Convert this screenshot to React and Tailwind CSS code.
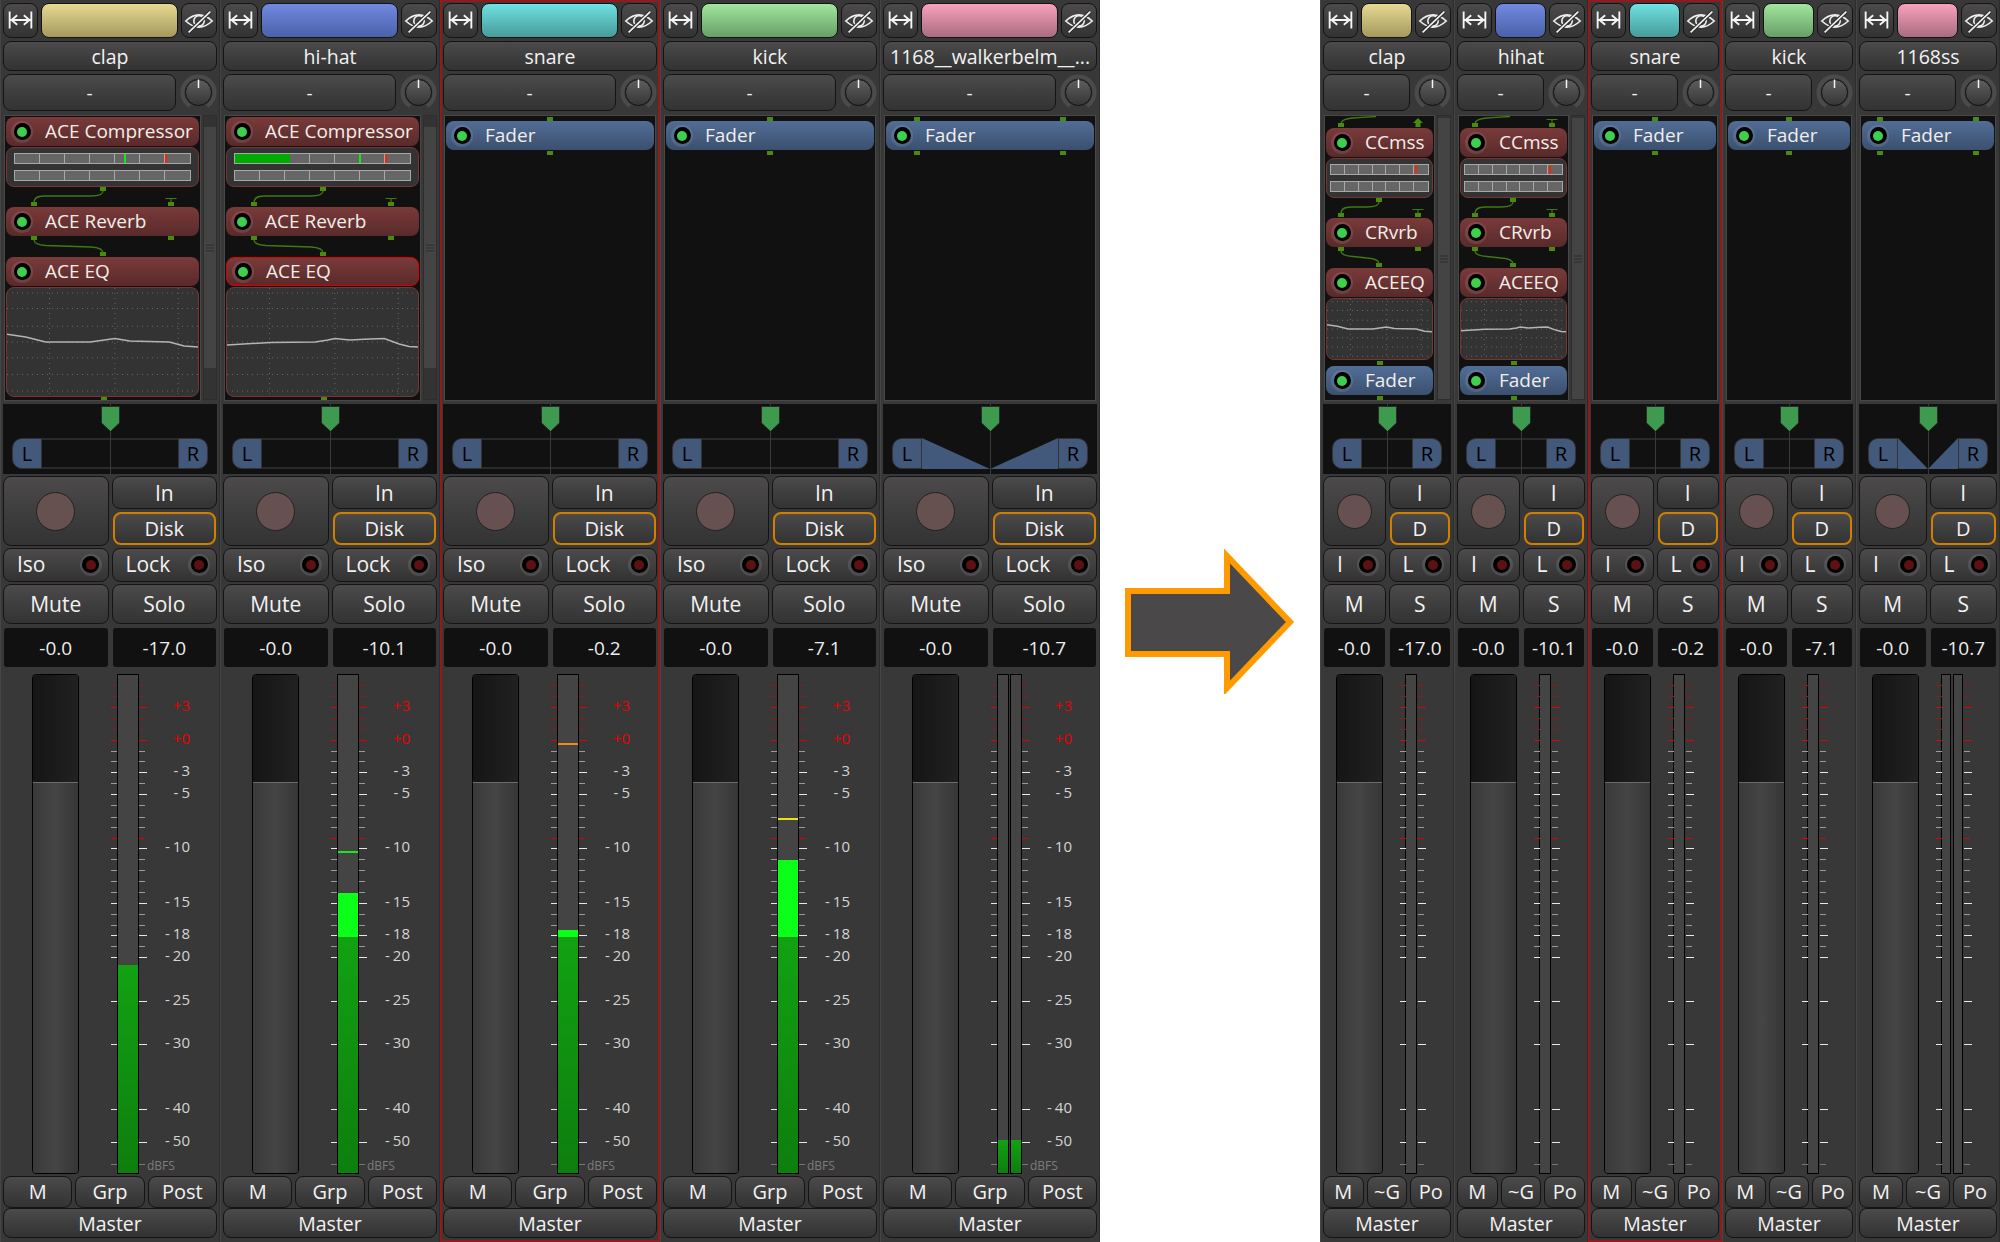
const BASE = 'flex items-center rounded-[8px] border border-[#141414] bg-linear-to-b from-[#4c4a4a] to-[#333333] text-[#f2f2f2]';
const BTN = `${BASE} justify-center`;
const TXT = `${BASE} justify-center pt-[2px]`;
const PIN = '#4a8a0c';
const WIRE = '#3f7a10';

const MAJOR = [
  [707, '+3', true], [740, '+0', true], [772, '-3'], [794, '-5'], [848, '-10'], [903, '-15'], [935, '-18'],
  [957, '-20'], [1001, '-25'], [1044, '-30'], [1109, '-40'], [1142, '-50'],
];
const MINOR = [751, 761, 783, 805, 817, 827, 859, 870, 881, 892, 914, 925, 946, 1164];
const MINOR_RED = [685, 696, 718, 729];

const CLAP_CURVE = '0,47 19,50 39,55 54,55 84,55 109,51.5 124,54 164,55 179,59 193,60';
const HAT_CURVE = '0,58 44,55.5 89,55 102,53 109,51.5 124,53 144,52 159,51.5 174,57 184,59.5 193,60';

const SIZES = {
  full: { width: 'w-[220px]', faderGap: 'ml-[29px]', meterGap: 'ml-[38px]', bar: 'w-[22px]', twin: 'w-[12px]', twinGap: 'gap-[1px]', procBox: 'w-[197px]', right: 136, meterLeft: 114, labels: true, cx: 98, lx: 29, rx: 166, barPad: 'px-[7px]', display: 'h-[110px]' },
  small: { width: 'w-[134px]', faderGap: 'ml-[13px]', meterGap: 'ml-[22px]', bar: 'w-[12px]', twin: 'w-[10px]', twinGap: 'gap-[2px]', procBox: 'w-[111px]', right: 95, meterLeft: 83, labels: false, cx: 54, lx: 16, rx: 93, barPad: 'px-[3px]', display: 'h-[62px]' },
  wide: { width: 'w-[144px]', faderGap: 'ml-[13px]', meterGap: 'ml-[22px]', bar: 'w-[12px]', twin: 'w-[10px]', twinGap: 'gap-[2px]', procBox: 'w-[111px]', right: 95, meterLeft: 83, labels: false, cx: 54, lx: 16, rx: 93, barPad: 'px-[3px]', display: 'h-[62px]' },
};

function WidthIcon() {
  return (
    <svg width="35" height="35" viewBox="0 0 35 35" fill="none" stroke="#f4f4f4" strokeWidth="2">
      <path d="M6 8V26M29 8V26M7 17H28" />
      <path d="M14 12L8 17L14 22M21 12L27 17L21 22" />
    </svg>
  );
}

function EyeIcon() {
  return (
    <svg width="36" height="35" viewBox="0 0 36 35" fill="none" stroke="#f0f0f0">
      <path d="M4 18Q18 5 32 18Q18 31 4 18Z" strokeWidth="1.7" />
      <circle cx="18" cy="18" r="5.5" strokeWidth="1.7" />
      <path d="M7 30L30 8" stroke="#2a2a2a" strokeWidth="4" />
      <path d="M7 30L30 8" strokeWidth="1.8" />
    </svg>
  );
}

function Knob() {
  return (
    <svg width="37" height="37" viewBox="0 0 37 37" fill="none">
      <defs>
        <linearGradient id="knob-face" x1="0" y1="0" x2="0" y2="1">
          <stop offset="0" stopColor="#5e5e5e" />
          <stop offset="1" stopColor="#363636" />
        </linearGradient>
      </defs>
      <path d="M10 32.1A16 16 0 1 1 27 32.1" stroke="#4b4b4b" strokeWidth="4" />
      <circle cx="18.5" cy="18.5" r="13" fill="url(#knob-face)" stroke="#111" />
      <path d="M18.5 5.5V14" stroke="#f4f4f4" strokeWidth="1.5" />
    </svg>
  );
}

function Led({ on }) {
  return (
    <div className="flex h-[22px] w-[22px] shrink-0 items-center justify-center rounded-full bg-white/10">
      <div className="flex h-[17px] w-[17px] items-center justify-center rounded-full bg-black">
        <div className={on ? 'h-[10px] w-[10px] rounded-full bg-[#3ecf4c]' : 'h-[10px] w-[10px] rounded-full bg-[#5c1212]'} />
      </div>
    </div>
  );
}

function Processor({ name, blue, selected }) {
  return (
    <div
      className={`flex h-[29px] shrink-0 items-center gap-[12px] rounded-[8px] pl-[5px] text-[19px] text-[#f2eeea] ${
        blue ? 'bg-linear-to-b from-[#526d96] to-[#3b506f]' : 'bg-linear-to-b from-[#7a3a3a] to-[#592a2a]'
      } ${selected ? 'border border-[#e00000]' : ''}`}
    >
      <Led on />
      <span className="whitespace-nowrap">{name}</span>
    </div>
  );
}

function Pin({ x, y }) {
  return <rect x={x - 3} y={y} width="6" height="4" fill={PIN} />;
}

function OutToIn({ s }) {
  return (
    <svg width="100%" height="20" className="block shrink-0" fill="none">
      <Pin x={s.cx} y={0} />
      <Pin x={s.lx} y={15} />
      <path
        d={`M${s.cx} 4C${s.cx} 8 ${s.cx - 5} 9 ${s.cx - 12} 9L${s.lx + 10} 9C${s.lx + 3} 9 ${s.lx} 11 ${s.lx} 16`}
        stroke={WIRE}
        strokeWidth="1.3"
      />
      <Pin x={s.rx} y={15} />
      <path d={`M${s.rx - 5.5} 11.5H${s.rx + 5.5}M${s.rx} 11.5V15`} stroke={WIRE} strokeWidth="1.2" />
    </svg>
  );
}

function InToOut({ s }) {
  return (
    <svg width="100%" height="21" className="block shrink-0" fill="none">
      <Pin x={s.lx} y={0} />
      <Pin x={s.rx} y={0} />
      <Pin x={s.cx} y={16} />
      <path
        d={`M${s.lx} 4C${s.lx} 8 ${s.lx + 5} 9 ${s.lx + 12} 9.5L${s.cx - 12} 11C${s.cx - 4} 11.5 ${s.cx} 13 ${s.cx} 17`}
        stroke={WIRE}
        strokeWidth="1.3"
      />
    </svg>
  );
}

function TopWire({ s, arrow }) {
  return (
    <svg width="100%" height="12" className="block shrink-0" fill="none">
      <path d={`M${s.lx + 35} 0.5C${s.lx + 24} 1 ${s.lx + 14} 1.5 ${s.lx + 8} 2.5C${s.lx + 2} 3.5 ${s.lx} 5 ${s.lx} 8`} stroke={WIRE} strokeWidth="1.3" />
      <Pin x={s.lx} y={7} />
      {arrow ? (
        <path d={`M${s.rx} 2L${s.rx + 5} 7H${s.rx + 2.5}V11H${s.rx - 2.5}V7H${s.rx - 5}Z`} fill={PIN} />
      ) : (
        <g>
          <Pin x={s.rx} y={7} />
          <path d={`M${s.rx - 5.5} 3.5H${s.rx + 5.5}M${s.rx} 3.5V7`} stroke={WIRE} strokeWidth="1.2" />
        </g>
      )}
    </svg>
  );
}

function Pins({ height, xs, y }) {
  return (
    <svg width="100%" height={height} className="block shrink-0">
      {xs.map((x) => (
        <Pin key={x} x={x} y={y} />
      ))}
    </svg>
  );
}

function GainBar({ fill, green, red }) {
  return (
    <div className="relative grid h-[11px] grid-cols-7 border border-[#a8a8a8] bg-[#666666]">
      {[0, 1, 2, 3, 4, 5, 6].map((i) => (
        <div key={i} className={i < 6 ? 'border-r border-[#a8a8a8]' : ''} />
      ))}
      {fill && <div className="absolute inset-y-0 left-0 bg-[#00aa00]" style={{ width: fill }} />}
      {green && <div className="absolute inset-y-0 w-[2px] bg-[#12e812]" style={{ left: green }} />}
      {red && <div className="absolute inset-y-0 w-[2px] bg-[#f02808]" style={{ left: red }} />}
    </div>
  );
}

function CompDisplay({ s, fill, green, red }) {
  return (
    <div className={`mt-[1px] flex h-[40px] shrink-0 flex-col justify-center gap-[6px] rounded-[8px] border border-[#7a3434] bg-[#333333] ${s.barPad}`}>
      <GainBar fill={fill} green={green} red={red} />
      <GainBar />
    </div>
  );
}

function EqDisplay({ s, curve }) {
  return (
    <div className={`mt-[1px] shrink-0 overflow-hidden rounded-[8px] border border-[#7a3434] bg-[#333333] ${s.display}`}>
      <svg width="100%" height="100%" viewBox="0 0 193 110" preserveAspectRatio="none" fill="none" className="block">
        {[5, 21, 39, 55, 71, 88, 105].map((y) => (
          <path key={y} d={`M0 ${y}H193`} stroke="#666" strokeDasharray="1 4" vectorEffect="non-scaling-stroke" />
        ))}
        {[43, 109, 173].map((x) => (
          <path key={x} d={`M${x} 0V110`} stroke="#666" strokeDasharray="1 4" vectorEffect="non-scaling-stroke" />
        ))}
        <polyline points={curve} stroke="#b4b4b4" strokeWidth="1.5" vectorEffect="non-scaling-stroke" />
      </svg>
    </div>
  );
}

function ScrollBar({ small }) {
  return (
    <div className="ml-[2px] flex h-[285px] w-[14px] flex-col border border-[#2e2e2e] bg-[#333333]">
      <div className={small ? 'mt-[2px] flex h-[282px] items-center justify-center bg-[#444444]' : 'mt-[11px] flex h-[241px] items-center justify-center bg-[#444444]'}>
        <svg width="8" height="8" stroke="#2c2c2c">
          <path d="M0 1H8M0 4H8M0 7H8" />
        </svg>
      </div>
    </div>
  );
}

function FullChain({ s, eqSelected, fill, green, red, curve }) {
  return (
    <div className="flex flex-col px-[1px] pt-[1px]">
      <Processor name="ACE Compressor" />
      <CompDisplay s={s} fill={fill} green={green} red={red} />
      <div className="-mx-[1px]">
        <OutToIn s={s} />
      </div>
      <Processor name="ACE Reverb" />
      <div className="-mx-[1px]">
        <InToOut s={s} />
      </div>
      <Processor name="ACE EQ" selected={eqSelected} />
      <EqDisplay s={s} curve={curve} />
      <Pins height={4} xs={[s.cx]} y={0} />
    </div>
  );
}

function SmallChain({ s, arrow, red, curve }) {
  return (
    <div className="flex flex-col px-[1px]">
      <div className="-mx-[1px]">
        <TopWire s={s} arrow={arrow} />
      </div>
      <Processor name="CCmss" />
      <CompDisplay s={s} red={red} />
      <div className="-mx-[1px]">
        <OutToIn s={s} />
      </div>
      <Processor name="CRvrb" />
      <div className="-mx-[1px]">
        <InToOut s={s} />
      </div>
      <Processor name="ACEEQ" />
      <EqDisplay s={s} curve={curve} />
      <Pins height={6} xs={[s.cx]} y={1} />
      <Processor name="Fader" blue />
      <Pins height={5} xs={[s.cx]} y={1} />
    </div>
  );
}

function Meter({ widthClass, bright, dark, peak, peakColor }) {
  return (
    <div className={`relative flex h-[500px] flex-col justify-end overflow-hidden border border-black bg-[#444444] ${widthClass}`}>
      {bright && <div className="bg-[#0bff18]" style={{ height: dark - bright }} />}
      {dark && <div className="bg-linear-to-b from-[#12a212] to-[#0e7e0e]" style={{ height: 1173 - dark }} />}
      {peak && <div className="absolute inset-x-0 h-[2px]" style={{ top: peak - 675, backgroundColor: peakColor }} />}
    </div>
  );
}

function MeterScale({ s, twin }) {
  const left = s.meterLeft;
  const right = twin ? (s.labels ? 139 : 105) : s.right;
  const labelEnd = twin ? 189 : 187;
  return (
    <svg className="absolute left-0 top-0 h-[500px] w-full font-['Open_Sans',sans-serif]" fill="none">
      {MINOR.map((y) => (
        <path key={y} d={`M${left - 6} ${y - 673.5}h6M${right} ${y - 673.5}h6`} stroke={y === 1164 ? '#777' : '#9a9a9a'} />
      ))}
      {MINOR_RED.map((y) => (
        <path key={y} d={`M${left - 6} ${y - 673.5}h6M${right} ${y - 673.5}h6`} stroke="#8c1a1a" />
      ))}
      <path d={`M${left - 6} ${838 - 673.5}h6M${right} ${838 - 673.5}h6`} stroke="#e00000" />
      {MAJOR.map(([y, label, hot]) => (
        <g key={label}>
          <path d={`M${left - 6} ${y - 673.5}h6M${right} ${y - 673.5}h8`} stroke={hot ? '#e80000' : '#e8e8e8'} />
          {s.labels && (
            <text x={labelEnd} y={y - 676} textAnchor="end" dominantBaseline="central" fontSize="15" fill={hot ? '#e80000' : '#d4d4d4'}>
              {label[0]}
              <tspan dx={hot ? 0 : 3}>{label.slice(1)}</tspan>
            </text>
          )}
        </g>
      ))}
      {s.labels && (
        <text x={twin ? 147 : 144} y={496} fontSize="12" fill="#7c7c7c">
          dBFS
        </text>
      )}
    </svg>
  );
}

function Strip({ size, name, color, selected, chain, wedge, twin, pinXs, gain, peakText, meter, iso, lock, mute, solo, input, disk, bus }) {
  const s = SIZES[size];
  return (
    <div
      className={`flex h-[1242px] shrink-0 flex-col bg-[#383838] px-[3px] pt-[3px] ${s.width} ${
        selected ? 'shadow-[inset_0_0_0_2px_#921a1a]' : 'shadow-[inset_-1px_0_0_#2d2d2d,inset_1px_0_0_#454545]'
      }`}
    >
      <div className="flex h-[35px] gap-[3px]">
        <div className={`${BTN} w-[35px] shrink-0`}>
          <WidthIcon />
        </div>
        <div className={`flex-1 rounded-[8px] border border-[#141414] bg-linear-to-b ${color}`} />
        <div className={`${BTN} w-[36px] shrink-0`}>
          <EyeIcon />
        </div>
      </div>

      <div className={`${TXT} mt-[3px] h-[30px] overflow-hidden whitespace-nowrap text-[19.5px]`}>{name}</div>

      <div className="mt-[3px] flex h-[37px] gap-[4px]">
        <div className={`${TXT} flex-1 text-[19px]`}>-</div>
        <Knob />
      </div>

      {/* Processor box */}
      <div className="mt-[4px] flex h-[286px]">
        {chain ? (
          <>
            <div className={`ml-[1px] shrink-0 overflow-hidden border border-[#484848] bg-[#111111] ${s.procBox}`}>{chain}</div>
            <ScrollBar small={size !== 'full'} />
          </>
        ) : (
          <div className="mx-[1px] flex-1 border border-[#484848] bg-[#111111] px-[1px]">
            <Pins height={5} xs={pinXs} y={1} />
            <Processor name="Fader" blue />
            <Pins height={6} xs={pinXs} y={1} />
          </div>
        )}
      </div>

      {/* Panner */}
      <div className="relative mt-[3px] flex h-[70px] items-end bg-[#111111] px-[9px] pb-[5px]">
        <div className="absolute inset-y-0 left-1/2 w-[1px] bg-[#3a3a3a]" />
        <svg width="19" height="26" viewBox="0 0 19 26" className="absolute left-1/2 top-[2px] -ml-[9px]">
          <path d="M0.5 0.5H18.5V17L9.5 25.5L0.5 17Z" fill="#3e9a4e" stroke="#2a2a2a" />
        </svg>
        <div className="flex h-[31px] w-full">
          <div className="flex w-[30px] shrink-0 items-center justify-center rounded-l-[10px] border border-[#333] bg-[#43597c] pt-[1px] text-[20px] text-black">L</div>
          <div className={`flex-1 ${wedge ? '' : 'border-y-2 border-[#2a2a2a]'}`}>
            {wedge && (
              <svg width="100%" height="100%" viewBox="0 0 100 100" preserveAspectRatio="none" className="block">
                <polygon points="0,0 50,100 0,100" fill="#43597c" />
                <polygon points="100,0 50,100 100,100" fill="#43597c" />
              </svg>
            )}
          </div>
          <div className="flex w-[30px] shrink-0 items-center justify-center rounded-r-[10px] border border-[#333] bg-[#43597c] pt-[1px] text-[20px] text-black">R</div>
        </div>
      </div>

      {/* Record and monitor */}
      <div className="mt-[2px] grid h-[70px] grid-cols-2 gap-x-[3px]">
        <div className={BTN}>
          <div className={`rounded-full border border-[#222222] bg-[#675050] ${size === 'full' ? 'h-[39px] w-[39px]' : 'h-[35px] w-[35px]'}`} />
        </div>
        <div className="flex flex-col gap-[3px]">
          <div className={`${TXT} h-[33px] text-[21px]`}>{input}</div>
          <div className="mx-[1px] flex h-[33px] items-center justify-center rounded-[8px] border-2 border-[#d08000] bg-linear-to-b from-[#4c4a4a] to-[#333333] pt-[1px] text-[20px] text-[#f2f2f2]">{disk}</div>
        </div>
      </div>

      <div className="mt-[2px] grid h-[33px] grid-cols-2 gap-x-[3px]">
        <div className={`${BASE} justify-between pl-[13px] pr-[6px] text-[21px]`}>
          <span>{iso}</span>
          <Led />
        </div>
        <div className={`${BASE} justify-between pl-[13px] pr-[6px] text-[21px]`}>
          <span>{lock}</span>
          <Led />
        </div>
      </div>

      <div className="mt-[3px] grid h-[40px] grid-cols-2 gap-x-[3px] text-[21px]">
        <div className={TXT}>{mute}</div>
        <div className={TXT}>{solo}</div>
      </div>

      <div className="mt-[4px] grid h-[39px] grid-cols-2 gap-x-[5px] px-[1px] text-[19px] text-[#ececec]">
        <div className="flex items-center justify-center rounded-[3px] bg-[#111111] pt-[1px]">{gain}</div>
        <div className="flex items-center justify-center rounded-[3px] bg-[#111111] pt-[1px]">{peakText}</div>
      </div>

      {/* Fader and meter */}
      <div className="relative mt-[7px] flex h-[500px]">
        <div className={`flex h-[500px] w-[47px] flex-col overflow-hidden rounded-[4px] border border-black ${s.faderGap}`}>
          <div className="h-[107px] bg-linear-to-r from-[#151515] to-[#212121]" />
          <div className="flex-1 border-t border-[#6a6a6a] bg-linear-to-r from-[#3a3a3a] via-[#454545] to-[#363636]" />
        </div>
        {twin ? (
          <div className={`flex ${s.meterGap} ${s.twinGap}`}>
            <Meter widthClass={s.twin} {...meter} />
            <Meter widthClass={s.twin} {...meter} />
          </div>
        ) : (
          <div className={s.meterGap}>
            <Meter widthClass={s.bar} {...meter} />
          </div>
        )}
        <MeterScale s={s} twin={twin} />
      </div>

      <div className="mt-[2px] grid h-[29px] grid-cols-3 gap-x-[3px] text-[20px]">
        {bus.map((label) => (
          <div key={label} className={BTN}>
            {label}
          </div>
        ))}
      </div>
      <div className={`${TXT} mt-[3px] h-[30px] text-[19.5px]`}>Master</div>
    </div>
  );
}

const COLORS = {
  clap: 'from-[#e6da92] to-[#a59a5e]',
  hat: 'from-[#7289e2] to-[#4a62a8]',
  snare: 'from-[#70e2e2] to-[#479b9b]',
  kick: 'from-[#a2e69e] to-[#689f68]',
  pink: 'from-[#f9a2bd] to-[#a96c80]',
};

const BIG = { input: 'In', disk: 'Disk', iso: 'Iso', lock: 'Lock', mute: 'Mute', solo: 'Solo', bus: ['M', 'Grp', 'Post'] };
const LITTLE = { input: 'I', disk: 'D', iso: 'I', lock: 'L', mute: 'M', solo: 'S', bus: ['M', '~G', 'Po'] };

export default function App() {
  const full = SIZES.full;
  const small = SIZES.small;
  return (
    <div className="flex h-[1242px] w-[2000px] overflow-hidden bg-white font-['Open_Sans',sans-serif]">
      <Strip
        {...BIG}
        size="full"
        name="clap"
        color={COLORS.clap}
        gain="-0.0"
        peakText="-17.0"
        meter={{ dark: 965 }}
        chain={<FullChain s={full} green={109} red={150} curve={CLAP_CURVE} />}
      />
      <Strip
        {...BIG}
        size="full"
        name="hi-hat"
        color={COLORS.hat}
        gain="-0.0"
        peakText="-10.1"
        meter={{ bright: 893, dark: 937, peak: 851, peakColor: '#18e818' }}
        chain={<FullChain s={full} eqSelected fill={55} green={124} red={150} curve={HAT_CURVE} />}
      />
      <Strip
        {...BIG}
        size="full"
        selected
        name="snare"
        color={COLORS.snare}
        gain="-0.0"
        peakText="-0.2"
        pinXs={[104]}
        meter={{ bright: 930, dark: 937, peak: 743, peakColor: '#f08a10' }}
      />
      <Strip
        {...BIG}
        size="full"
        name="kick"
        color={COLORS.kick}
        gain="-0.0"
        peakText="-7.1"
        pinXs={[104]}
        meter={{ bright: 860, dark: 937, peak: 818, peakColor: '#f0e010' }}
      />
      <Strip
        {...BIG}
        size="full"
        name="1168__walkerbelm__..."
        color={COLORS.pink}
        wedge
        twin
        pinXs={[31, 177]}
        gain="-0.0"
        peakText="-10.7"
        meter={{ dark: 1140 }}
      />

      <div className="flex h-[1242px] w-[220px] shrink-0 items-center justify-center">
        <svg width="170" height="145" viewBox="0 0 170 145" fill="#4a4848" stroke="#ff9b00" strokeWidth="6">
          <path d="M3 42H102V7L165 73L102 139V105H3Z" />
        </svg>
      </div>

      <Strip {...LITTLE} size="small" name="clap" color={COLORS.clap} gain="-0.0" peakText="-17.0" meter={{}} chain={<SmallChain s={small} arrow red={84} curve={CLAP_CURVE} />} />
      <Strip {...LITTLE} size="small" name="hihat" color={COLORS.hat} gain="-0.0" peakText="-10.1" meter={{}} chain={<SmallChain s={small} red={84} curve={HAT_CURVE} />} />
      <Strip {...LITTLE} size="small" selected name="snare" color={COLORS.snare} gain="-0.0" peakText="-0.2" pinXs={[61]} meter={{}} />
      <Strip {...LITTLE} size="small" name="kick" color={COLORS.kick} gain="-0.0" peakText="-7.1" pinXs={[61]} meter={{}} />
      <Strip {...LITTLE} size="wide" name="1168ss" color={COLORS.pink} wedge twin pinXs={[18, 114]} gain="-0.0" peakText="-10.7" meter={{}} />
    </div>
  );
}
